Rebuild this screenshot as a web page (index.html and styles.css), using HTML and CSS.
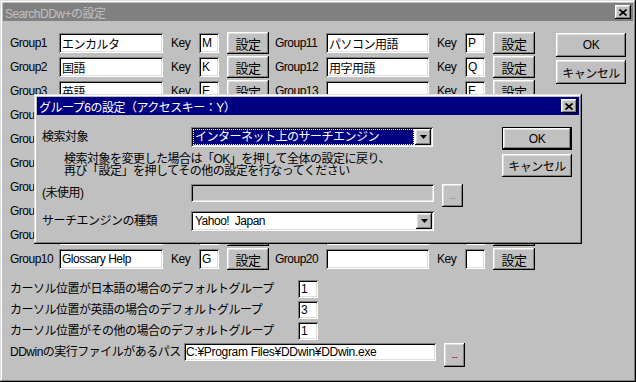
FILE: index.html
```html
<!DOCTYPE html>
<html lang="ja">
<head>
    <meta charset="UTF-8">
    <title>SearchDDw+の設定</title>
    <link rel="stylesheet" href="styles.css">
</head>
<body>

<div class="window">
    <div class="titlebar">
        <span>SearchDDw+の設定</span>
        <span class="close raised">
            <svg width="8" height="7" viewBox="0 0 8 7"><path d="M0.5 0.5L7.5 6.5M7.5 0.5L0.5 6.5" stroke="#000" stroke-width="1.7"/></svg>
        </span>
    </div>

    <div class="client">
        <div class="top">
            <div class="groups">
                <div class="row">
                    <span class="lbl">Group1</span><input class="field name" value="エンカルタ"><span class="key-lbl">Key</span><input class="field key" value="M"><button class="btn raised set">設定</button>
                    <span class="lbl lbl-r">Group11</span><input class="field name-r" value="パソコン用語"><span class="key-lbl">Key</span><input class="field key" value="P"><button class="btn raised set">設定</button>
                </div>
                <div class="row">
                    <span class="lbl">Group2</span><input class="field name" value="国語"><span class="key-lbl">Key</span><input class="field key" value="K"><button class="btn raised set">設定</button>
                    <span class="lbl lbl-r">Group12</span><input class="field name-r" value="用字用語"><span class="key-lbl">Key</span><input class="field key" value="Q"><button class="btn raised set">設定</button>
                </div>
                <div class="row">
                    <span class="lbl">Group3</span><input class="field name" value="英語"><span class="key-lbl">Key</span><input class="field key" value="E"><button class="btn raised set">設定</button>
                    <span class="lbl lbl-r">Group13</span><input class="field name-r" value=""><span class="key-lbl">Key</span><input class="field key" value="E"><button class="btn raised set">設定</button>
                </div>
                <!-- rows 4-9 sit behind the group dialog, only their labels peek out -->
                <div class="row">
                    <span class="lbl">Group4</span><input class="field name"><span class="key-lbl"></span><input class="field key"><button class="btn raised set"></button>
                    <span class="lbl lbl-r"></span><input class="field name-r"><span class="key-lbl"></span><input class="field key"><button class="btn raised set"></button>
                </div>
                <div class="row">
                    <span class="lbl">Group5</span><input class="field name"><span class="key-lbl"></span><input class="field key"><button class="btn raised set"></button>
                    <span class="lbl lbl-r"></span><input class="field name-r"><span class="key-lbl"></span><input class="field key"><button class="btn raised set"></button>
                </div>
                <div class="row">
                    <span class="lbl">Group6</span><input class="field name"><span class="key-lbl"></span><input class="field key"><button class="btn raised set"></button>
                    <span class="lbl lbl-r"></span><input class="field name-r"><span class="key-lbl"></span><input class="field key"><button class="btn raised set"></button>
                </div>
                <div class="row">
                    <span class="lbl">Group7</span><input class="field name"><span class="key-lbl"></span><input class="field key"><button class="btn raised set"></button>
                    <span class="lbl lbl-r"></span><input class="field name-r"><span class="key-lbl"></span><input class="field key"><button class="btn raised set"></button>
                </div>
                <div class="row">
                    <span class="lbl">Group8</span><input class="field name"><span class="key-lbl"></span><input class="field key"><button class="btn raised set"></button>
                    <span class="lbl lbl-r"></span><input class="field name-r"><span class="key-lbl"></span><input class="field key"><button class="btn raised set"></button>
                </div>
                <div class="row">
                    <span class="lbl">Group9</span><input class="field name"><span class="key-lbl"></span><input class="field key"><button class="btn raised set"></button>
                    <span class="lbl lbl-r"></span><input class="field name-r"><span class="key-lbl"></span><input class="field key"><button class="btn raised set"></button>
                </div>
                <div class="row">
                    <span class="lbl">Group10</span><input class="field name" value="Glossary Help"><span class="key-lbl">Key</span><input class="field key" value="G"><button class="btn raised set">設定</button>
                    <span class="lbl lbl-r">Group20</span><input class="field name-r" value=""><span class="key-lbl">Key</span><input class="field key" value=""><button class="btn raised set">設定</button>
                </div>
            </div>

            <div class="side-buttons">
                <button class="btn raised">OK</button>
                <button class="btn raised">キャンセル</button>
            </div>
        </div>

        <div class="defaults">
            <div class="def-row">
                <span class="def-lbl">カーソル位置が日本語の場合のデフォルトグループ</span><input class="field small" value="1">
            </div>
            <div class="def-row">
                <span class="def-lbl">カーソル位置が英語の場合のデフォルトグループ</span><input class="field small" value="3">
            </div>
            <div class="def-row">
                <span class="def-lbl">カーソル位置がその他の場合のデフォルトグループ</span><input class="field small" value="1">
            </div>
            <div class="def-row">
                <span class="path-lbl">DDwinの実行ファイルがあるパス</span><input class="field path" value="C:¥Program Files¥DDwin¥DDwin.exe"><button class="btn raised dots">...</button>
            </div>
        </div>
    </div>

    <div class="dialog">
        <div class="titlebar">
            <span>グループ6の設定（アクセスキー：Y）</span>
            <span class="close raised">
                <svg width="8" height="7" viewBox="0 0 8 7"><path d="M0.5 0.5L7.5 6.5M7.5 0.5L0.5 6.5" stroke="#000" stroke-width="1.7"/></svg>
            </span>
        </div>
        <div class="dlg-body">
            <div class="dlg-form">
                <div class="dlg-row">
                    <span class="dlg-lbl">検索対象</span>
                    <div class="combo sunken">
                        <div class="combo-text selected">インターネット上のサーチエンジン</div>
                        <div class="arrow raised"><svg width="7" height="4" viewBox="0 0 7 4"><path d="M0 0H7L3.5 4Z" fill="#000"/></svg></div>
                    </div>
                </div>
                <p class="note">検索対象を変更した場合は「OK」を押して全体の設定に戻り、<br>再び「設定」を押してその他の設定を行なってください</p>
                <div class="dlg-row unused">
                    <span class="dlg-lbl">(未使用)</span>
                    <input class="field wide" disabled>
                    <button class="btn raised dots dim">...</button>
                </div>
                <div class="dlg-row engine">
                    <span class="dlg-lbl">サーチエンジンの種類</span>
                    <div class="combo sunken wide-combo">
                        <div class="combo-text">Yahoo!&nbsp; Japan</div>
                        <div class="arrow raised"><svg width="7" height="4" viewBox="0 0 7 4"><path d="M0 0H7L3.5 4Z" fill="#000"/></svg></div>
                    </div>
                </div>
            </div>
            <div class="dlg-buttons">
                <button class="btn default">OK</button>
                <button class="btn raised">キャンセル</button>
            </div>
        </div>
    </div>
</div>

</body>
</html>
```

FILE: styles.css
```css
* {
    box-sizing: border-box;
}
body {
    margin: 0;
    background: #c0c0c0;
    font-family: "Liberation Sans", "Noto Sans CJK JP", sans-serif;
    font-size: 12px;
    letter-spacing: -0.5px;
    color: #000;
}

/* win95 bevels */
.raised {
    background: #c0c0c0;
    box-shadow: inset -1px -1px #000, inset 1px 1px #fff, inset -2px -2px #808080, inset 2px 2px #dfdfdf;
}
.sunken {
    box-shadow: inset 1px 1px #808080, inset -1px -1px #fff, inset 2px 2px #000, inset -2px -2px #dfdfdf;
}

.window {
    position: relative;
    width: 636px;
    height: 382px;
    padding: 3px;
    background: #c0c0c0;
    box-shadow: inset -1px -1px #000, inset 1px 1px #dfdfdf, inset -2px -2px #808080, inset 2px 2px #fff;
}
.titlebar {
    height: 18px;
    display: flex;
    align-items: center;
    justify-content: space-between;
    padding: 0 2px 0 2px;
    background: #808080;
    color: #c0c0c0;
    white-space: nowrap;
}
.close {
    width: 16px;
    height: 14px;
    display: flex;
    align-items: center;
    justify-content: center;
}

.client {
    padding: 10px 0 0 7px;
}
.top {
    display: flex;
}
.row {
    display: flex;
    align-items: center;
    height: 24px;
}
.field {
    border: none;
    margin: 0;
    padding: 0 3px;
    height: 20px;
    background: #fff;
    font: inherit;
    letter-spacing: inherit;
    color: #000;
    box-shadow: inset 1px 1px #808080, inset -1px -1px #fff, inset 2px 2px #000, inset -2px -2px #dfdfdf;
    outline: none;
}
.lbl {
    width: 49px;
}
.lbl-r {
    width: 51px;
    margin-left: 6px;
}
.name {
    width: 104px;
}
.name-r {
    width: 103px;
}
.key-lbl {
    width: 28px;
    margin-left: 8px;
}
.key {
    width: 20px;
}
.btn {
    border: none;
    padding: 0;
    margin: 0;
    font: inherit;
    letter-spacing: inherit;
    color: #000;
    background: #c0c0c0;
}
.set {
    width: 42px;
    height: 22px;
    margin-left: 8px;
    font-size: 13px;
}
.side-buttons {
    display: flex;
    flex-direction: column;
    gap: 3px;
    margin: 2px 0 0 21px;
}
.side-buttons .btn {
    width: 70px;
    height: 24px;
}

.defaults {
    margin-top: 8px;
}
.def-row {
    display: flex;
    align-items: flex-start;
    height: 21px;
}
.def-lbl, .path-lbl {
    line-height: 20px;
    white-space: nowrap;
}
.def-lbl {
    width: 288px;
}
.path-lbl {
    width: 174px;
}
.def-row .field {
    height: 18px;
    margin-top: 1px;
}
.small {
    width: 20px;
}
.path {
    width: 252px;
    padding-left: 2px;
    letter-spacing: -0.3px;
}
.dots {
    width: 21px;
    height: 24px;
    margin: 1px 0 0 8px;
    font-size: 9px;
}

/* overlapping modal */
.dialog {
    position: absolute;
    left: 34px;
    top: 94px;
    width: 548px;
    height: 150px;
    padding: 3px;
    background: #c0c0c0;
    box-shadow: inset -1px -1px #000, inset 1px 1px #dfdfdf, inset -2px -2px #808080, inset 2px 2px #fff;
}
.dialog .titlebar {
    background: #000080;
    color: #fff;
}
.dlg-body {
    display: flex;
    padding: 12px 0 0 5px;
}
.dlg-form {
    width: 421px;
}
.dlg-row {
    display: flex;
    align-items: flex-start;
}
.dlg-lbl {
    width: 149px;
    line-height: 20px;
    white-space: nowrap;
}
.combo {
    display: flex;
    width: 242px;
    height: 20px;
    padding: 2px;
    background: #fff;
}
.wide-combo {
    width: 243px;
}
.combo-text {
    flex: 1;
    padding: 0 2px;
    line-height: 16px;
    white-space: nowrap;
    overflow: hidden;
}
.combo-text.selected {
    background: #000080;
    color: #fff;
    outline: 1px dotted #ffff80;
    outline-offset: -1px;
    margin-right: 1px;
}
.arrow {
    width: 16px;
    height: 16px;
    display: flex;
    align-items: center;
    justify-content: center;
}
.note {
    margin: 6px 0 0 22px;
    line-height: 12px;
    white-space: nowrap;
}
.unused {
    margin-top: 7px;
}
.unused .dlg-lbl {
    line-height: 18px;
}
.wide {
    width: 243px;
    height: 18px;
    background: #c0c0c0;
}
.unused .dots {
    height: 23px;
    margin-top: 0;
}
.dim {
    color: #808080;
}
.engine {
    margin-top: 4px;
}
.dlg-buttons {
    display: flex;
    flex-direction: column;
    gap: 4px;
    margin-left: 39px;
}
.dlg-buttons .btn {
    width: 70px;
    height: 23px;
}
.btn.default {
    box-shadow: inset 0 0 0 1px #000, inset -2px -2px #000, inset 2px 2px #fff, inset -3px -3px #808080, inset 3px 3px #dfdfdf;
}
```
